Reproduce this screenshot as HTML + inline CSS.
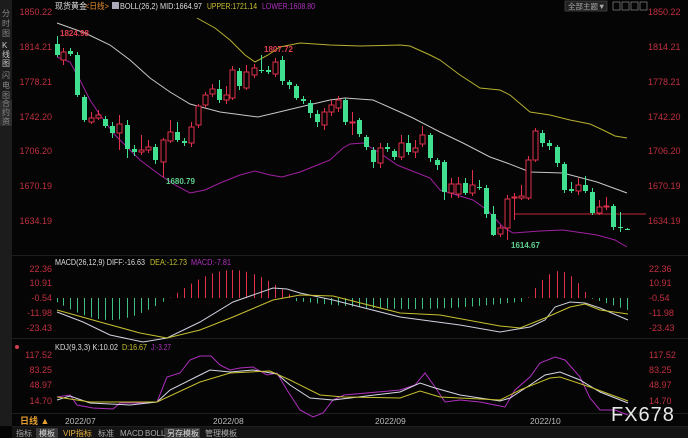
<!DOCTYPE html><html><head><meta charset="utf-8"><style>
body{margin:0;background:#050505;width:688px;height:438px;overflow:hidden;font-family:"Liberation Sans","Noto Sans CJK SC",sans-serif}
svg{display:block}
</style></head><body>
<svg id="s" width="688" height="438" xmlns="http://www.w3.org/2000/svg" font-family="Liberation Sans, Noto Sans CJK SC, sans-serif">
<rect width="688" height="438" fill="#050505"/>
<rect x="0" y="0" width="12" height="426" fill="#1c1c1c"/>
<rect x="0" y="100" width="12" height="26" fill="#2e2e2e"/>
<g fill="#888" font-size="8">
<text x="2" y="16">分</text><text x="2" y="26">时</text><text x="2" y="36">图</text>
<text x="2" y="48" fill="#ccc">K</text><text x="2" y="57" fill="#ccc">线</text><text x="2" y="66" fill="#ccc">图</text>
<text x="2" y="78">闪</text><text x="2" y="88">电</text><text x="2" y="98">图</text>
<text x="2" y="106">合</text><text x="2" y="115">约</text><text x="2" y="124">资</text>
</g>
<g stroke="#1e1e1e"><line x1="12" y1="255.5" x2="688" y2="255.5"/><line x1="12" y1="338.5" x2="688" y2="338.5"/><line x1="12" y1="413.5" x2="688" y2="413.5"/><line x1="12" y1="426.5" x2="688" y2="426.5"/></g>
<g font-size="9" fill="#c03040" text-anchor="end">
<text x="52" y="15">1850.22</text><text x="52" y="50">1814.21</text><text x="52" y="85">1778.21</text><text x="52" y="120">1742.20</text><text x="52" y="154">1706.20</text><text x="52" y="189">1670.19</text><text x="52" y="224">1634.19</text>
<text x="52" y="272">22.36</text><text x="52" y="286">10.91</text><text x="52" y="301">-0.54</text><text x="52" y="316">-11.98</text><text x="52" y="331">-23.43</text>
<text x="52" y="358">117.52</text><text x="52" y="373">83.25</text><text x="52" y="388">48.97</text><text x="52" y="404">14.70</text>
</g>
<g font-size="9" fill="#c03040">
<text x="648" y="15">1850.22</text><text x="648" y="50">1814.21</text><text x="648" y="85">1778.21</text><text x="648" y="120">1742.20</text><text x="648" y="154">1706.20</text><text x="648" y="189">1670.19</text><text x="648" y="224">1634.19</text>
<text x="649" y="272">22.36</text><text x="649" y="286">10.91</text><text x="649" y="301">-0.54</text><text x="649" y="316">-11.98</text><text x="649" y="331">-23.43</text>
<text x="649" y="358">117.52</text><text x="649" y="373">83.25</text><text x="649" y="388">48.97</text><text x="649" y="404">14.70</text>
</g>
<g font-size="8.5">
<text x="55" y="9" fill="#ddd" textLength="32" lengthAdjust="spacingAndGlyphs">现货黄金</text><text x="85" y="9" fill="#e89030" textLength="24" lengthAdjust="spacingAndGlyphs">&lt;日线&gt;</text>
<rect x="112" y="2" width="7" height="7" fill="#aab"/>
<text x="120" y="9" fill="#ddd" textLength="82" lengthAdjust="spacingAndGlyphs">BOLL(26,2) MID:1664.97</text>
<text x="207" y="9" fill="#c8c030" textLength="50" lengthAdjust="spacingAndGlyphs">UPPER:1721.14</text><text x="262" y="9" fill="#b030c0" textLength="53" lengthAdjust="spacingAndGlyphs">LOWER:1608.80</text>
<text x="55" y="265" fill="#ddd" textLength="90" lengthAdjust="spacingAndGlyphs">MACD(26,12,9) DIFF:-16.63</text><text x="150" y="265" fill="#c8c030" textLength="37" lengthAdjust="spacingAndGlyphs">DEA:-12.73</text><text x="191" y="265" fill="#b030c0" textLength="40" lengthAdjust="spacingAndGlyphs">MACD:-7.81</text>
<text x="55" y="350" fill="#ddd" textLength="63" lengthAdjust="spacingAndGlyphs">KDJ(9,3,3) K:10.02</text><text x="122" y="350" fill="#c8c030" textLength="25" lengthAdjust="spacingAndGlyphs">D:16.67</text><text x="151" y="350" fill="#b030c0" textLength="20" lengthAdjust="spacingAndGlyphs">J:-3.27</text>
</g>
<circle cx="17" cy="347" r="2" fill="#d04050"/>
<rect x="565" y="1" width="42" height="10" fill="#222" stroke="#555" stroke-width="0.6"/>
<text x="568" y="9" font-size="7.5" fill="#aaa">全部主题▼</text>
<g fill="none" stroke="#888" stroke-width="0.7"><rect x="613" y="2" width="7" height="8"/><rect x="622" y="2" width="7" height="8"/><rect x="631" y="2" width="7" height="8"/><rect x="640" y="2" width="7" height="8"/></g>
<g id="c"></g>
<g font-size="8" font-weight="bold">
<text x="60" y="36" fill="#e04050">1824.98</text><text x="264" y="52" fill="#e04050">1807.72</text>
<text x="166" y="184" fill="#60d090">1680.79</text><text x="511" y="248" fill="#60d090">1614.67</text>
</g>
<g font-size="8.5" fill="#bbb"><text x="65" y="424">2022/07</text><text x="213" y="424">2022/08</text><text x="375" y="424">2022/09</text><text x="530" y="424">2022/10</text></g>
<text x="20" y="424" font-size="9" fill="#e8a030" font-weight="bold">日线 ▲</text>
<rect x="12" y="427" width="676" height="11" fill="#141414"/>
<rect x="36" y="428" width="22" height="10" fill="#3a3a3a"/><rect x="164" y="428" width="36" height="10" fill="#3a3a3a"/>
<g font-size="8" fill="#aaa"><text x="16" y="436">指标</text><text x="39" y="436" fill="#ddd">模板</text><text x="63" y="436" fill="#e8b040">VIP指标</text><text x="98" y="436">标准</text><text x="120" y="436">MACD</text><text x="145" y="436">BOLL</text><text x="167" y="436" fill="#ddd">另存模板</text><text x="205" y="436">管理模板</text></g>
<text x="611" y="421" font-size="20" fill="#e8e8e8" letter-spacing="1">FX678</text>
</svg>
<script>
var g=document.getElementById('c'),h='';
var C=[[57,44,55,36,57],[63,60,52,48,65],[70,51,54,48,56],[77,55,95,52,97],[84,97,120,95,122],[91,122,118,112,124],[98,118,115,110,120],[105,119,126,116,128],[112,126,133,122,138],[119,133,124,115,150],[127,125,149,120,158],[134,149,152,145,156],[141,152,150,135,155],[148,150,147,140,153],[155,147,160,144,164],[163,162,140,138,177],[170,141,132,120,143],[177,132,140,122,142],[184,141,143,138,146],[191,143,127,122,147],[198,125,106,104,128],[205,105,95,92,108],[212,94,89,84,97],[219,89,100,80,103],[226,100,95,86,104],[232,98,70,66,100],[239,71,86,68,90],[246,88,72,65,90],[254,75,68,64,78],[261,70,71,55,73],[268,70,72,66,74],[275,74,62,58,77],[282,60,81,56,85],[289,82,85,80,89],[296,86,98,84,100],[303,99,101,96,104],[310,103,113,100,118],[317,114,122,110,127],[324,125,112,108,130],[331,112,105,100,116],[338,108,100,96,112],[345,100,122,98,125],[352,123,122,112,135],[359,120,134,118,137],[366,137,147,135,150],[373,150,162,147,168],[380,163,148,143,168],[387,147,149,143,152],[394,151,157,149,160],[401,157,143,135,160],[408,143,152,135,155],[415,152,148,140,158],[422,144,135,126,147],[430,135,158,133,162],[437,160,165,158,170],[444,162,192,160,200],[451,193,184,178,198],[458,194,184,177,198],[465,183,193,178,195],[472,193,185,170,196],[479,187,188,180,190],[486,188,214,185,218],[493,214,235,206,236],[500,234,228,225,237],[507,228,199,195,240],[514,198,197,193,220],[521,198,196,185,200],[528,198,160,156,200],[535,160,131,128,162],[542,133,143,130,147],[549,143,146,140,150],[557,147,163,145,167],[564,164,190,162,193],[571,189,191,182,193],[578,191,185,178,195],[585,185,191,176,193],[592,192,213,188,215],[599,213,207,200,215],[606,207,206,197,210],[613,206,227,204,230],[620,227,228,212,232],[627,229,229,228,230]];
h+='<line x1="514" y1="214" x2="646" y2="214" stroke="#c02838" stroke-width="1"/>';
function pl(p,c){return '<polyline fill="none" stroke="'+c+'" stroke-width="1" points="'+p+'"/>';}
h+=pl("57,23 85,33 110,45 130,60 150,78 170,92 190,104 220,112 258,117 275,113 300,107 330,100 345,98 373,100 400,112 413,118 440,132 463,143 490,157 507,163 530,172 563,173 597,182 627,193","#c8c8c8");
h+=pl("197,18 215,28 230,40 245,55 255,62 268,55 280,47 300,43 330,45 360,46 400,45 410,46 430,55 440,60 460,75 480,88 500,90 510,95 530,112 550,115 570,120 590,124 603,130 615,136 627,138","#b8b030");
h+=pl("57,57 70,62 80,80 90,100 100,115 115,135 140,160 160,175 175,185 190,193 205,190 220,183 240,175 255,171 270,175 282,177 300,172 315,166 330,160 343,148 350,144 363,143 380,153 397,165 430,178 440,190 473,200 487,210 503,227 513,233 540,231 563,230 597,235 615,240 627,247","#a020a0");
C.forEach(function(c){var x=c[0],o=c[1],cl=c[2],red=cl<o,col=red?'#e0304a':'#40e090';var t=Math.min(o,cl),b=Math.max(o,cl);if(b-t<1)b=t+1;
h+='<line x1="'+(x+0.5)+'" y1="'+c[3]+'" x2="'+(x+0.5)+'" y2="'+c[4]+'" stroke="'+col+'"/>';
if(red)h+='<rect x="'+(x-2)+'" y="'+t+'" width="5" height="'+(b-t)+'" fill="#050505" stroke="'+col+'"/>';else h+='<rect x="'+(x-2)+'" y="'+t+'" width="5" height="'+(b-t)+'" fill="'+col+'"/>';});
for(var i=0;i<C.length;i++){var x=C[i][0]+0.5,v;
if(x<170)v=-Math.sin((x-50)/120*Math.PI)*22;else if(x<295)v=Math.sin((x-170)/125*Math.PI)*28;else if(x<528)v=-(3+8*Math.sin((x-295)/233*Math.PI));else if(x<590)v=Math.sin((x-528)/62*Math.PI)*27;else v=-(x-590)/38*12;
var y0=298,col=v>0?'#e0304a':'#40c080';h+='<line x1="'+x+'" y1="'+y0+'" x2="'+x+'" y2="'+(y0-v)+'" stroke="'+col+'"/>';}
h+=pl("57,312 83,322 110,335 143,342 167,338 200,322 233,302 273,288 287,289 300,293 333,300 400,317 460,325 500,332 530,327 545,320 555,307 570,302 585,303 600,308 628,320","#d0d0e0");
h+=pl("57,310 100,322 140,333 167,338 200,330 233,317 273,300 300,295 333,296 400,313 440,315 500,326 520,328 545,318 570,307 585,304 600,310 628,314","#c8c030");
h+=pl("57,397 70,395 77,405 93,408 113,409 120,403 140,403 157,402 167,377 180,373 190,360 200,356 211,356 220,365 230,370 240,368 253,367 267,375 277,373 287,390 300,410 313,417 323,413 333,400 344,395 400,390 415,385 425,373 435,387 445,402 460,400 480,402 495,405 505,407 515,390 530,377 540,363 555,357 565,360 580,377 590,398 600,410 615,410 628,415","#b030c0");
h+=pl("57,400 70,396 90,403 130,405 157,402 170,390 200,375 210,370 230,372 253,370 277,374 290,385 310,398 333,400 350,398 400,392 420,383 435,388 460,395 500,401 510,398 530,385 545,375 560,372 580,380 600,392 628,403","#d8d8e8");
h+=pl("57,397 90,402 157,402 200,382 230,373 270,371 290,380 320,395 344,397 400,398 420,391 440,397 500,400 520,390 550,378 560,377 590,387 628,401","#c8c030");
g.innerHTML=h;
</script>
</body></html>
